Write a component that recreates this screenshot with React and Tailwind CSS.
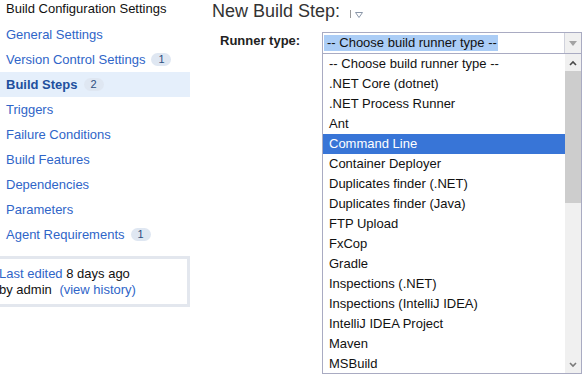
import React from 'react';

const navItems = [
  { label: 'General Settings' },
  { label: 'Version Control Settings', count: 1 },
  { label: 'Build Steps', count: 2, active: true },
  { label: 'Triggers' },
  { label: 'Failure Conditions' },
  { label: 'Build Features' },
  { label: 'Dependencies' },
  { label: 'Parameters' },
  { label: 'Agent Requirements', count: 1 },
];

const runners = [
  '-- Choose build runner type --',
  '.NET Core (dotnet)',
  '.NET Process Runner',
  'Ant',
  'Command Line',
  'Container Deployer',
  'Duplicates finder (.NET)',
  'Duplicates finder (Java)',
  'FTP Upload',
  'FxCop',
  'Gradle',
  'Inspections (.NET)',
  'Inspections (IntelliJ IDEA)',
  'IntelliJ IDEA Project',
  'Maven',
  'MSBuild',
];

function Sidebar() {
  return (
    <div className="w-[190px] shrink-0">
      <div className="h-[22px] pl-[6px] leading-[18px] text-[#111]">Build Configuration Settings</div>
      {navItems.map((item) => (
        <div
          key={item.label}
          className={
            item.active
              ? 'flex h-[25px] items-center bg-[#e5effb] pl-[6px] font-bold text-[#214f9e]'
              : 'flex h-[25px] items-center pl-[6px] text-[#2f65c8]'
          }
        >
          <span className="leading-[25px]">{item.label}</span>
          {item.count && (
            <span className="ml-[6px] flex h-[13px] min-w-[20px] items-center justify-center rounded-full bg-[#dfe7f2] text-[11px] font-normal text-[#2e4f80]">
              {item.count}
            </span>
          )}
        </div>
      ))}
      <div className="-ml-[11px] mt-[9px] w-[201px] border-[3px] border-[#e3e7ee] pb-[6px] pl-[7px] pt-[7px] leading-[16px]">
        <div>
          <span className="text-[#2f65c8]">Last edited</span> <span className="text-[#111]">8 days ago</span>
        </div>
        <div className="text-[#111]">
          by admin <span className="ml-[4px] text-[#2f65c8]">(view history)</span>
        </div>
      </div>
    </div>
  );
}

function RunnerSelect() {
  return (
    <div className="w-[260px]">
      <div className="flex h-[22px] border border-[#a9abc2] bg-white">
        <div className="flex-1 pl-[1px] pt-[2px]">
          <span className="block w-fit bg-[#abcdf6] pl-[3px] pr-[1px] leading-[16px] text-[#111]">
            -- Choose build runner type --
          </span>
        </div>
        <div className="flex w-[17px] items-center justify-center border-l border-[#d0d2dc] bg-[#f0f0f0]">
          <svg width="8" height="5" viewBox="0 0 8 5">
            <path d="M0 0 H8 L4 5 Z" fill="#a3a3a3" />
          </svg>
        </div>
      </div>
      <div className="flex h-[320px] overflow-hidden border-x border-b border-[#a9abc2] bg-white">
        <div className="flex-1 overflow-hidden">
          {runners.map((r) => (
            <div
              key={r}
              className={
                r === 'Command Line'
                  ? 'h-[20px] bg-[#3875d7] pl-[6px] leading-[20px] text-white'
                  : 'h-[20px] pl-[6px] leading-[20px] text-[#111]'
              }
            >
              {r}
            </div>
          ))}
        </div>
        <div className="flex w-[16px] flex-col bg-[#f0f0f0]">
          <div className="flex h-[17px] items-center justify-center">
            <svg width="8" height="6" viewBox="0 0 8 6">
              <path d="M1 5 L4 2 L7 5" fill="none" stroke="#4a4a4a" strokeWidth="1.6" />
            </svg>
          </div>
          <div className="mx-[0px] h-[132px] bg-[#cdcdcd]" />
          <div className="flex-1" />
          <div className="flex h-[17px] items-center justify-center">
            <svg width="8" height="6" viewBox="0 0 8 6">
              <path d="M1 1 L4 4 L7 1" fill="none" stroke="#7a7a7a" strokeWidth="1.6" />
            </svg>
          </div>
        </div>
      </div>
    </div>
  );
}

export default function App() {
  return (
    <div
      className="flex h-[379px] w-[585px] gap-[22px] overflow-hidden bg-white text-[13px]"
      style={{ fontFamily: '"Liberation Sans", Arial, sans-serif' }}
    >
      <Sidebar />
      <div className="flex-1">
        <div className="flex h-[22px] items-center">
          <span className="text-[18px] leading-[22px] text-[#333]">New Build Step:</span>
          <span className="ml-[10px] mt-[5px] h-[8px] border-l border-[#9a9a9a]" />
          <svg className="ml-[4px] mt-[8px]" width="8" height="6" viewBox="0 0 8 6">
            <path d="M0.5 0.5 H7.5 L4 5.5 Z" fill="none" stroke="#8a96a8" strokeWidth="1" />
          </svg>
        </div>
        <div className="mt-[10px] flex">
          <div className="w-[110px] pl-[8px] font-bold leading-[18px] text-[#222]">Runner type:</div>
          <RunnerSelect />
        </div>
      </div>
    </div>
  );
}
